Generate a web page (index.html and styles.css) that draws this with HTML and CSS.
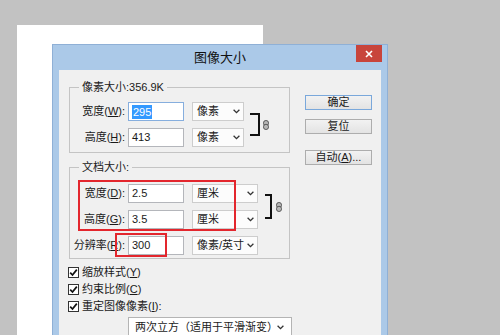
FILE: index.html
```html
<html>
<head>
<meta charset="utf-8">
<title>图像大小</title>
<link rel="stylesheet" href="styles.css">
</head>
<body>
<div class="canvas"></div>

<div class="dialog">
    <div class="titlebar">
        <span class="title">图像大小</span>
        <span class="close">
            <svg width="8" height="8" viewBox="0 0 8 8"><path d="M1 1L7 7M7 1L1 7" stroke="#fff" stroke-width="1.6"/></svg>
        </span>
    </div>
    <div class="client">
        <div class="main">
            <fieldset class="group">
                <legend>像素大小:356.9K</legend>
                <div class="grid px">
                    <label>宽度(<u>W</u>):</label>
                    <span class="field focus"><span class="hl">295</span></span>
                    <span class="select">像素<svg class="chev" width="7" height="5" viewBox="0 0 7 5"><path d="M0.6 0.8L3.5 3.7L6.4 0.8" fill="none" stroke="#333" stroke-width="1.3"/></svg></span>
                    <span class="bracket"></span>
                    <svg class="chain" width="6" height="10" viewBox="0 0 6 10"><rect x="0.5" y="0.5" width="5" height="5.2" rx="2.4" fill="#b8b8b8" stroke="#555"/><rect x="0.5" y="4.3" width="5" height="5.2" rx="2.4" fill="#b8b8b8" stroke="#555"/></svg>

                    <label>高度(<u>H</u>):</label>
                    <span class="field">413</span>
                    <span class="select">像素<svg class="chev" width="7" height="5" viewBox="0 0 7 5"><path d="M0.6 0.8L3.5 3.7L6.4 0.8" fill="none" stroke="#333" stroke-width="1.3"/></svg></span>
                </div>
            </fieldset>

            <fieldset class="group doc">
                <legend>文档大小:</legend>
                <div class="grid cm">
                    <label>宽度(<u>D</u>):</label>
                    <span class="field">2.5</span>
                    <span class="select">厘米<svg class="chev" width="7" height="5" viewBox="0 0 7 5"><path d="M0.6 0.8L3.5 3.7L6.4 0.8" fill="none" stroke="#333" stroke-width="1.3"/></svg></span>
                    <span class="bracket"></span>
                    <svg class="chain" width="6" height="10" viewBox="0 0 6 10"><rect x="0.5" y="0.5" width="5" height="5.2" rx="2.4" fill="#b8b8b8" stroke="#555"/><rect x="0.5" y="4.3" width="5" height="5.2" rx="2.4" fill="#b8b8b8" stroke="#555"/></svg>

                    <label>高度(<u>G</u>):</label>
                    <span class="field">3.5</span>
                    <span class="select">厘米<svg class="chev" width="7" height="5" viewBox="0 0 7 5"><path d="M0.6 0.8L3.5 3.7L6.4 0.8" fill="none" stroke="#333" stroke-width="1.3"/></svg></span>

                    <label>分辨率(<u>R</u>):</label>
                    <span class="field">300</span>
                    <span class="select">像素/英寸<svg class="chev" width="7" height="5" viewBox="0 0 7 5"><path d="M0.6 0.8L3.5 3.7L6.4 0.8" fill="none" stroke="#333" stroke-width="1.3"/></svg></span>
                </div>
            </fieldset>

            <ul class="checks">
                <li><span class="box"><svg width="9" height="9" viewBox="0 0 9 9"><path d="M1.2 4.6L3.5 7L7.8 1.6" fill="none" stroke="#111" stroke-width="1.7"/></svg></span>缩放样式(<u>Y</u>)</li>
                <li><span class="box"><svg width="9" height="9" viewBox="0 0 9 9"><path d="M1.2 4.6L3.5 7L7.8 1.6" fill="none" stroke="#111" stroke-width="1.7"/></svg></span>约束比例(<u>C</u>)</li>
                <li><span class="box"><svg width="9" height="9" viewBox="0 0 9 9"><path d="M1.2 4.6L3.5 7L7.8 1.6" fill="none" stroke="#111" stroke-width="1.7"/></svg></span>重定图像像素(<u>I</u>):</li>
            </ul>

            <div class="method">两次立方（适用于平滑渐变）<svg class="chev" width="7" height="5" viewBox="0 0 7 5"><path d="M0.6 0.8L3.5 3.7L6.4 0.8" fill="none" stroke="#333" stroke-width="1.3"/></svg></div>
        </div>

        <div class="buttons">
            <span class="btn default">确定</span>
            <span class="btn">复位</span>
            <span class="btn auto">自动(<u>A</u>)...</span>
        </div>
    </div>

    <!-- 红框标注 -->
    <span class="mark mark-size"></span>
    <span class="mark mark-res"></span>
</div>
</body>
</html>
```

FILE: styles.css
```css
*{box-sizing:border-box;}
html,body,ul,li{margin:0;padding:0;}
ul{list-style-type:none;}
body{position:relative;width:500px;height:335px;overflow:hidden;background:#c2c2c2;color:#1a1a1a;font:11px/15px "Liberation Sans","Noto Sans CJK SC",sans-serif;}
u{text-decoration:underline;text-underline-offset:1px;}

.canvas{width:246px;height:310px;margin:25px 0 0 17px;background:#fff;}

.dialog{position:absolute;left:52px;top:44px;width:336px;height:300px;padding:0 6px;border:1px solid #8fb0d6;background:#abc9e8;}
.titlebar{display:grid;grid-template-columns:1fr auto 1fr;height:25px;}
.title{grid-column:2;font-size:13px;line-height:25px;color:#111;}
.close{grid-column:3;justify-self:end;display:flex;align-items:center;justify-content:center;width:26px;height:17px;margin-right:-1px;background:#c8443b;}

.client{display:flex;height:270px;padding:10px 9px 0 10px;background:#f0f0f0;}
.main{width:223px;}

.group{width:221px;margin:0;padding:7px 0 5px;border:1px solid #c4c4c4;}
.group legend{margin-left:9px;padding:0 3px;line-height:15px;}
.group.doc{margin-top:7px;padding:9px 0 3px;}

.grid{display:grid;row-gap:7px;grid-auto-rows:19px;align-items:center;}
.grid.px{grid-template-columns:58px 64px 58px 13px 6px;}
.grid.cm{grid-template-columns:58px 64px 73px 11px 6px;}
.grid label{text-align:right;padding-right:3px;white-space:nowrap;}

.field{display:flex;align-items:center;width:56px;height:19px;padding-left:3px;border:1px solid #b4b6bb;background:#fff;}
.field.focus{border-color:#86aede;}
.hl{padding:0 1px;background:#3399ff;color:#fff;line-height:14px;}

.select{display:flex;align-items:center;justify-content:space-between;gap:3px;height:19px;padding:0 3px 0 4px;border:1px solid #cdcdcd;background:#fcfcfc;white-space:nowrap;}
.px .select{width:52px;}
.cm .select{width:66px;}
.chev{flex:none;}

.bracket{grid-column:4;grid-row:1 / 3;align-self:center;border:2px solid #111;border-left:0;}
.px .bracket{width:10px;height:23px;}
.cm .bracket{width:7px;height:25px;}
.chain{grid-column:5;grid-row:1 / 3;align-self:center;}

.checks{margin:5px 0 0 -1px;}
.checks li{display:flex;align-items:center;height:17px;}
.box{display:flex;align-items:center;justify-content:center;width:11px;height:11px;margin-right:3px;border:1px solid #333;background:#fff;}

.method{display:flex;align-items:center;justify-content:space-between;width:164px;height:20px;margin:2px 0 0 59px;padding:0 7px 0 6px;border:1px solid #b4b4b4;background:#fff;}

.buttons{display:flex;flex-direction:column;width:67px;margin-left:auto;padding-top:15px;}
.btn{display:block;height:15px;margin-bottom:9px;border:1px solid #adadad;background:linear-gradient(#f2f2f2,#e3e3e3);text-align:center;line-height:13px;}
.btn.default{border-color:#7aa8db;}
.btn.auto{margin-top:7px;}

.mark{position:absolute;border:2px solid #e3262d;}
.mark-size{left:25px;top:135px;width:158px;height:51px;}
.mark-res{left:62px;top:188px;width:52px;height:24px;}
```
